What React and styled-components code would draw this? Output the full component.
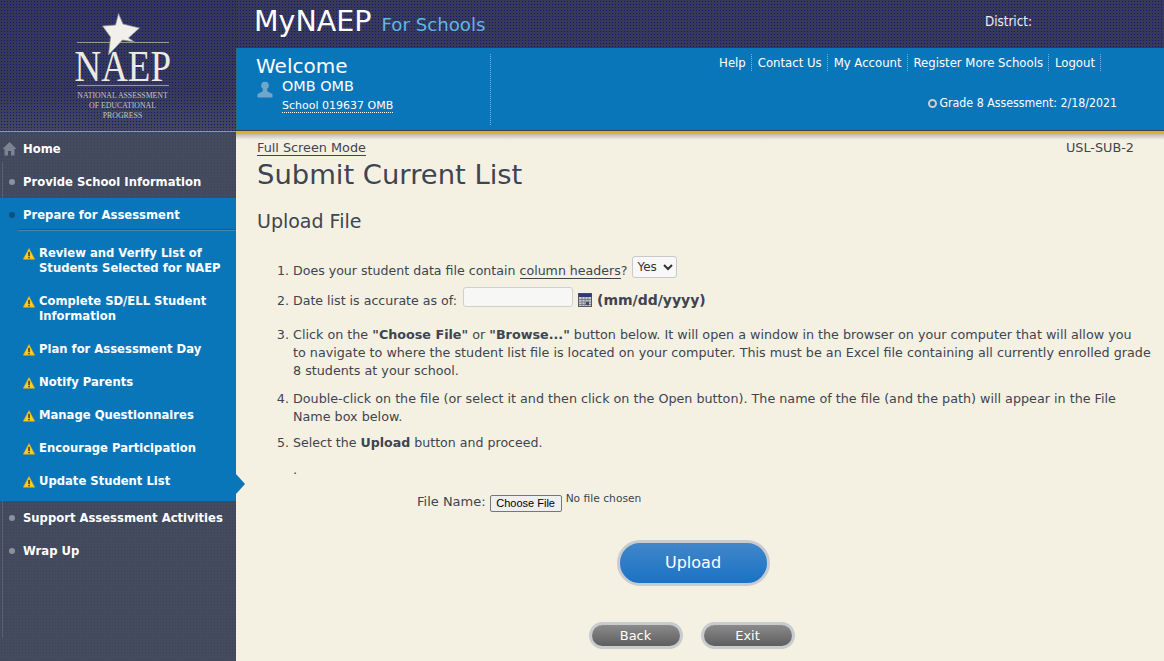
import styled, { createGlobalStyle } from "styled-components"

const Global = createGlobalStyle`
  html, body { margin: 0; padding: 0; height: 100%; overflow: hidden; }
  body { font-family: "DejaVu Sans", Verdana, sans-serif; background: #f4f1e3; color: #3e4450; }
`

const Page = styled.div`
  display: grid;
  grid-template-columns: 236px 1fr;
  height: 661px;
  width: 1164px;
  overflow: hidden;
`

const Left = styled.aside`
  display: flex;
  flex-direction: column;
`

const LogoBox = styled.div`
  height: 132px;
  box-sizing: border-box;
  padding: 13px 0 0 9px;
  display: flex;
  flex-direction: column;
  align-items: center;
  background-color: #363a58;
  background-image:
    radial-gradient(circle, #14147c 0.7px, transparent 0.9px),
    linear-gradient(#33365a 0%, #363a58 70%, #414760 100%);
  background-size: 3px 3px, 100% 100%;
  border-bottom: 1px solid #b59a2c;
`

const LogoMark = styled.div`
  position: relative;
  width: 92px;
  height: 73px;
  color: #eceae2;
  display: flex;
  flex-direction: column;
  justify-content: flex-end;
  align-items: center;
`

const LogoStar = styled.svg`
  position: absolute;
  left: 25px;
  top: 0;
  z-index: 1;
`

const LogoWord = styled.div`
  display: flex;
  justify-content: center;
  font-family: "Liberation Serif", serif;
  font-size: 45px;
  line-height: 38px;
  width: 92px;
  height: 44px;
  box-sizing: border-box;
  padding-top: 4px;
  border-top: 1px solid #9a9a8c;
  border-bottom: 1px solid #9a9a8c;
  & > span {
    display: block;
    flex: none;
    transform: scaleX(0.82);
    transform-origin: center;
  }
`

const LogoSmall = styled.div`
  font-family: "Liberation Serif", serif;
  font-size: 7.8px;
  line-height: 10px;
  margin-top: 5px;
  text-align: center;
  color: #c4c4bd;
  white-space: nowrap;
`

const Sidebar = styled.nav`
  position: relative;
  flex: 1;
  background-color: #444b5e;
  background-image: radial-gradient(circle, #3c4257 0.6px, transparent 0.8px);
  background-size: 3px 3px;
  &::before {
    content: "";
    position: absolute;
    left: 2px;
    top: 30px;
    width: 1px;
    height: 476px;
    background: #59606f;
  }
`

const NavRow = styled.a`
  display: flex;
  align-items: center;
  height: 33px;
  padding-left: 23px;
  position: relative;
  color: #fff;
  font-size: 11.6px;
  font-weight: 700;
`

const Bullet = styled.span`
  position: absolute;
  left: 9px;
  top: 14px;
  width: 6px;
  height: 6px;
  border-radius: 50%;
  background: ${({ $active }) => ($active ? "#0b4f80" : "#8d919e")};
`

const HomeIcon = styled.svg`
  position: absolute;
  left: 2px;
  top: 9px;
`

const ActiveGroup = styled.div`
  position: relative;
  z-index: 1;
  background: #0a76ba;
`

const GroupRule = styled.div`
  height: 1px;
  margin: -1px 0 0 18px;
  background: #4a86ae;
  box-shadow: 0 -1px 0 #0c5f96;
`

const SubList = styled.ul`
  list-style: none;
  margin: 0;
  padding: 7px 0 2px;
`

const SubItem = styled.li`
  position: relative;
  display: flex;
  padding: 8px 10px 10px 23px;
  gap: 4px;
  color: #fff;
  font-size: 11.6px;
  font-weight: 700;
  line-height: 15px;
`

const WarnIcon = styled.svg`
  flex: none;
  margin-top: 2px;
`

const ActiveArrow = styled.span`
  position: absolute;
  right: -9px;
  top: 8px;
  width: 0;
  height: 0;
  border-left: 9px solid #0a76ba;
  border-top: 10px solid transparent;
  border-bottom: 10px solid transparent;
`

const Right = styled.div`
  display: flex;
  flex-direction: column;
  min-width: 0;
`

const TopBand = styled.header`
  height: 48px;
  box-sizing: border-box;
  display: flex;
  align-items: flex-start;
  justify-content: space-between;
  padding: 5px 132px 0 18px;
  background-color: #363a58;
  background-image: radial-gradient(circle, #14147c 0.7px, transparent 0.9px);
  background-size: 3px 3px;
`

const Brand = styled.div`
  display: flex;
  align-items: baseline;
  gap: 10px;
`

const BrandName = styled.span`
  color: #fff;
  font-size: 28.5px;
  line-height: 34px;
`

const BrandSub = styled.span`
  color: #5fb6e2;
  font-size: 18.2px;
`

const District = styled.div`
  color: #eeeeee;
  font-family: "DejaVu Sans Condensed", "DejaVu Sans", sans-serif;
  font-size: 13.3px;
  margin-top: 9px;
`

const BlueBand = styled.div`
  height: 82px;
  box-sizing: border-box;
  display: flex;
  background: #0a76ba;
  border-left: 1px solid #2a6c8c;
  color: #fff;
`

const Welcome = styled.div`
  width: 254px;
  height: 71px;
  margin-top: 6px;
  box-sizing: border-box;
  padding: 0 0 0 19px;
  border-right: 1px dotted #7fb6d8;
`

const WelcomeTitle = styled.div`
  font-size: 20px;
  line-height: 24px;
`

const UserRow = styled.div`
  display: flex;
  gap: 9px;
  margin-left: 1px;
`

const UserIcon = styled.svg`
  margin-top: 3px;
`

const UserName = styled.div`
  font-size: 14.4px;
  line-height: 16px;
`

const School = styled.span`
  display: inline-block;
  font-size: 11px;
  line-height: 13px;
  margin-top: 5px;
  border-bottom: 1px dotted #fff;
`

const BlueRight = styled.div`
  flex: 1;
  display: flex;
  flex-direction: column;
  align-items: flex-end;
  padding-right: 47px;
  font-family: "DejaVu Sans Condensed", "DejaVu Sans", sans-serif;
`

const TopLinks = styled.div`
  display: flex;
  margin-top: 6px;
  margin-right: 16px;
`

const TopLink = styled.a`
  font-size: 13px;
  line-height: 17px;
  padding: 0 5px 0 6px;
  border-right: 1px dotted #7fb6d8;
`

const GradeRow = styled.div`
  display: flex;
  align-items: center;
  gap: 3px;
  font-size: 12.25px;
  margin-top: 25px;
`

const GradeDot = styled.span`
  width: 5px;
  height: 5px;
  border-radius: 50%;
  background: #1d6a9c;
  border: 2px solid #c8ced4;
`

const GoldLine = styled.div`
  height: 4px;
  background: #dcb128;
  border-top: 1px solid #3b4246;
  box-sizing: border-box;
`

const Main = styled.main`
  flex: 1;
  padding: 0 30px 0 21px;
  background: linear-gradient(#bdb9b4 0, #f4f1e3 6px);
`

const TopRow = styled.div`
  display: flex;
  justify-content: space-between;
  padding-top: 6px;
  font-size: 12.8px;
  line-height: 16px;
`

const FullScreen = styled.a`
  border-bottom: 1px solid #3e4450;
  height: 15px;
`

const Code = styled.span`
  font-size: 12.8px;
`

const Title = styled.h1`
  margin: 1px 0 0;
  font-size: 27.4px;
  line-height: 36px;
  font-weight: 400;
`

const Subtitle = styled.h2`
  margin: 16px 0 0;
  font-size: 19px;
  line-height: 24px;
  font-weight: 400;
`

const Steps = styled.ol`
  margin: 23px -24px 0 0;
  padding: 0 0 0 36px;
  font-size: 12.6px;
  line-height: 18px;
`

const Step = styled.li`
  margin-bottom: ${({ $gap }) => $gap}px;
  font-size: ${({ $wide }) => ($wide ? "12.74px" : "inherit")};
`

const Underlined = styled.span`
  border-bottom: 1px solid #3e4450;
`

const Select = styled.select`
  font-family: "DejaVu Sans", sans-serif;
  font-size: 12px;
  height: 22px;
  width: 45px;
  margin-left: 5px;
  color: #333;
  background: #f8f8f8;
  border: 1px solid #c9c9c9;
  border-radius: 3px;
  vertical-align: 4px;
`

const DateInput = styled.input`
  width: 110px;
  height: 20px;
  box-sizing: border-box;
  margin: 0 5px 0 6px;
  background: #f7f7f5;
  border: 1px solid #cfcfcf;
  border-radius: 3px;
  vertical-align: 3px;
`

const CalIcon = styled.svg`
  vertical-align: -2px;
  margin-right: 5px;
`

const DateHint = styled.strong`
  font-size: 14px;
`

const Dot = styled.div`
  margin: 9px 0 0 36px;
  font-size: 13px;
  line-height: 18px;
`

const FileRow = styled.div`
  display: flex;
  align-items: flex-start;
  margin: 13px 0 0 160px;
`

const FileLabel = styled.label`
  font-size: 13px;
  line-height: 18px;
  margin-top: 1px;
`

const FileButton = styled.button`
  font-family: "Liberation Sans", Arial, sans-serif;
  font-size: 11px;
  color: #000;
  width: 72px;
  height: 17px;
  padding: 0;
  margin: 3px 4px 0 4px;
  background: #efefef;
  border: 1px solid #767676;
  border-radius: 2px;
`

const NoFile = styled.span`
  font-size: 10.7px;
  line-height: 14px;
`

const UploadWrap = styled.div`
  display: flex;
  justify-content: center;
  margin: 28px 0 0 -5px;
`

const Upload = styled.button`
  font-family: "DejaVu Sans", sans-serif;
  width: 153px;
  height: 46px;
  color: #fff;
  font-size: 16px;
  background: linear-gradient(#4186c9, #1a72c5);
  border: 3px solid #c8ccd0;
  border-radius: 23px;
`

const BottomBar = styled.div`
  display: flex;
  justify-content: center;
  gap: 18px;
  margin: 36px 0 0 -8px;
`

const GreyButton = styled.button`
  font-family: "DejaVu Sans", sans-serif;
  width: 94px;
  height: 27px;
  color: #fff;
  font-size: 13px;
  padding: 0;
  background: linear-gradient(#8b8b8b, #5e5e5e);
  border: 3px solid #c8ccd0;
  border-radius: 14px;
`

const Warn = () => (
  <WarnIcon width="12" height="12" viewBox="0 0 12 12">
    <path d="M6 0.5 L11.7 11.2 H0.3 Z" fill="#f6cf2a" stroke="#e0a81a" strokeWidth="0.6" strokeLinejoin="round" />
    <rect x="5.3" y="3.8" width="1.5" height="4.3" fill="#3a3320" />
    <rect x="5.3" y="8.9" width="1.5" height="1.4" fill="#3a3320" />
  </WarnIcon>
)

const subItems = [
  ["Review and Verify List of", "Students Selected for NAEP"],
  ["Complete SD/ELL Student", "Information"],
  ["Plan for Assessment Day"],
  ["Notify Parents"],
  ["Manage Questionnaires"],
  ["Encourage Participation"],
  ["Update Student List"],
]

export default function App() {
  return (
    <Page>
      <Global />
      <Left>
        <LogoBox>
          <LogoMark>
            <LogoStar width="38" height="43" viewBox="0 0 38 43">
              <path d="M16.5 0.5 L21 11 L37.5 15 L26.5 25 L32.5 29 L20.5 27 L6.5 42 L8.5 24 L0.5 13 L13.5 12 Z" fill="#f1f0ea" stroke="#8b8d96" strokeWidth="0.8" strokeLinejoin="round" />
            </LogoStar>
            <LogoWord>
              <span>NAEP</span>
            </LogoWord>
          </LogoMark>
          <LogoSmall>
            NATIONAL ASSESSMENT
            <br />
            OF EDUCATIONAL
            <br />
            PROGRESS
          </LogoSmall>
        </LogoBox>
        <Sidebar>
          <NavRow>
            <HomeIcon width="15" height="15" viewBox="0 0 15 15">
              <path d="M7.5 1 L14.5 8 H12.5 V14.5 H9 V10 H6 V14.5 H2.5 V8 H0.5 Z" fill="#7c8494" />
            </HomeIcon>
            Home
          </NavRow>
          <NavRow>
            <Bullet />
            Provide School Information
          </NavRow>
          <ActiveGroup>
            <NavRow>
              <Bullet $active />
              Prepare for Assessment
            </NavRow>
            <GroupRule />
            <SubList>
              {subItems.map((lines, i) => (
                <SubItem key={lines[0]}>
                  <Warn />
                  <div>
                    {lines.map(line => (
                      <div key={line}>{line}</div>
                    ))}
                  </div>
                  {i === subItems.length - 1 && <ActiveArrow />}
                </SubItem>
              ))}
            </SubList>
          </ActiveGroup>
          <NavRow>
            <Bullet />
            Support Assessment Activities
          </NavRow>
          <NavRow>
            <Bullet />
            Wrap Up
          </NavRow>
        </Sidebar>
      </Left>
      <Right>
        <TopBand>
          <Brand>
            <BrandName>MyNAEP</BrandName>
            <BrandSub>For Schools</BrandSub>
          </Brand>
          <District>District:</District>
        </TopBand>
        <BlueBand>
          <Welcome>
            <WelcomeTitle>Welcome</WelcomeTitle>
            <UserRow>
              <UserIcon width="16" height="17" viewBox="0 0 16 17">
                <circle cx="8" cy="4.5" r="3.8" fill="#6fa6c9" />
                <path d="M6 8 H10 L10.5 10.5 L15.5 13 V16.5 H0.5 V13 L5.5 10.5 Z" fill="#6fa6c9" />
              </UserIcon>
              <div>
                <UserName>OMB OMB</UserName>
                <School>School 019637 OMB</School>
              </div>
            </UserRow>
          </Welcome>
          <BlueRight>
            <TopLinks>
              <TopLink>Help</TopLink>
              <TopLink>Contact Us</TopLink>
              <TopLink>My Account</TopLink>
              <TopLink>Register More Schools</TopLink>
              <TopLink>Logout</TopLink>
            </TopLinks>
            <GradeRow>
              <GradeDot />
              Grade 8 Assessment: 2/18/2021
            </GradeRow>
          </BlueRight>
        </BlueBand>
        <GoldLine />
        <Main>
          <TopRow>
            <FullScreen>Full Screen Mode</FullScreen>
            <Code>USL-SUB-2</Code>
          </TopRow>
          <Title>Submit Current List</Title>
          <Subtitle>Upload File</Subtitle>
          <Steps>
            <Step $gap={7}>
              Does your student data file contain <Underlined>column headers</Underlined>?
              <Select defaultValue="Yes">
                <option>Yes</option>
                <option>No</option>
              </Select>
            </Step>
            <Step $gap={16}>
              Date list is accurate as of:
              <DateInput type="text" />
              <CalIcon width="14" height="14" viewBox="0 0 14 14">
                <rect x="0.5" y="0.5" width="13" height="13" fill="#c9ccd2" stroke="#54586a" />
                <rect x="0.5" y="0.5" width="13" height="3.5" fill="#2c3a78" />
                <path d="M1 6.5 H13 M1 9 H13 M1 11.5 H13 M4 4 V13 M7 4 V13 M10 4 V13" stroke="#6c7078" strokeWidth="0.8" />
                <rect x="8" y="9" width="3" height="3" fill="#3c4c50" />
              </CalIcon>
              <DateHint>(mm/dd/yyyy)</DateHint>
            </Step>
            <Step $gap={10} $wide>
              Click on the <strong>"Choose File"</strong> or <strong>"Browse..."</strong> button below. It will open a
              window in the browser on your computer that will allow you
              <br />
              to navigate to where the student list file is located on your computer. This must be an Excel file
              containing all currently enrolled grade
              <br />8 students at your school.
            </Step>
            <Step $gap={8} $wide>
              Double-click on the file (or select it and then click on the Open button). The name of the file (and the
              path) will appear in the File
              <br />
              Name box below.
            </Step>
            <Step $gap={0}>
              Select the <strong>Upload</strong> button and proceed.
            </Step>
          </Steps>
          <Dot>.</Dot>
          <FileRow>
            <FileLabel>File Name:</FileLabel>
            <FileButton>Choose File</FileButton>
            <NoFile>No file chosen</NoFile>
          </FileRow>
          <UploadWrap>
            <Upload>Upload</Upload>
          </UploadWrap>
          <BottomBar>
            <GreyButton>Back</GreyButton>
            <GreyButton>Exit</GreyButton>
          </BottomBar>
        </Main>
      </Right>
    </Page>
  )
}
